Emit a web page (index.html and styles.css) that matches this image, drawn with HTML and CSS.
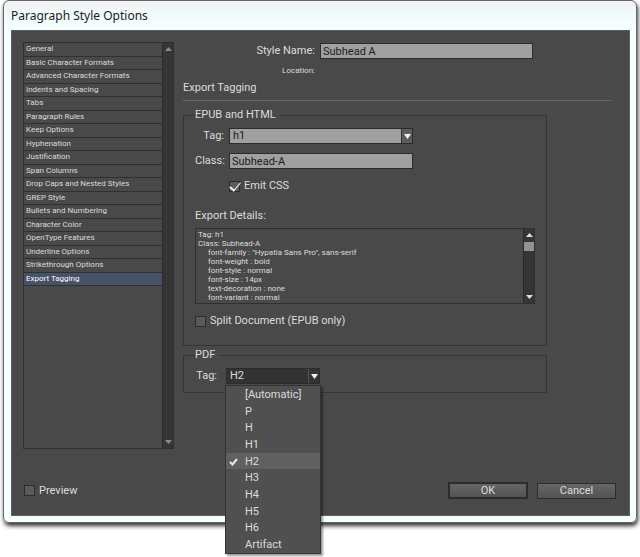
FILE: index.html
```html
<!DOCTYPE html>
<html lang="en">
<head>
    <meta charset="utf-8">
    <title>Paragraph Style Options</title>
    <link rel="stylesheet" href="styles.css">
</head>
<body>

<div class="window">
    <h1 class="title">Paragraph Style Options</h1>

    <form class="dialog">
        <div class="main">
            <nav class="sidebar">
                <div class="list">
                    <a href="#">General</a>
                    <a href="#">Basic Character Formats</a>
                    <a href="#">Advanced Character Formats</a>
                    <a href="#">Indents and Spacing</a>
                    <a href="#">Tabs</a>
                    <a href="#">Paragraph Rules</a>
                    <a href="#">Keep Options</a>
                    <a href="#">Hyphenation</a>
                    <a href="#">Justification</a>
                    <a href="#">Span Columns</a>
                    <a href="#">Drop Caps and Nested Styles</a>
                    <a href="#">GREP Style</a>
                    <a href="#">Bullets and Numbering</a>
                    <a href="#">Character Color</a>
                    <a href="#">OpenType Features</a>
                    <a href="#">Underline Options</a>
                    <a href="#">Strikethrough Options</a>
                    <a href="#" class="active">Export Tagging</a>
                </div>
                <div class="scrollbar dim">
                    <svg width="7" height="4" viewBox="0 0 7 4"><path d="M0 4L3.5 0L7 4Z"/></svg>
                    <svg width="7" height="4" viewBox="0 0 7 4"><path d="M0 0L3.5 4L7 0Z"/></svg>
                </div>
            </nav>

            <div class="panel">
                <div class="name-row">
                    <label for="styleName">Style Name:</label>
                    <input type="text" id="styleName" class="field" value="Subhead A">
                </div>
                <div class="location">Location:</div>

                <h2 class="heading">Export Tagging</h2>

                <fieldset class="group epub">
                    <legend>EPUB and HTML</legend>
                    <div class="row">
                        <label for="epubTag">Tag:</label>
                        <div class="select light">
                            <select id="epubTag" class="field">
                                <option>h1</option>
                                <option>h2</option>
                                <option>p</option>
                            </select>
                            <span class="arrow"><svg width="7" height="5" viewBox="0 0 7 5"><path d="M0 0L3.5 5L7 0Z"/></svg></span>
                        </div>
                    </div>
                    <div class="row">
                        <label for="className">Class:</label>
                        <input type="text" id="className" class="field" value="Subhead-A">
                    </div>
                    <label class="check emit"><input type="checkbox" checked>Emit CSS</label>

                    <label class="details-label" for="details">Export Details:</label>
                    <div class="details">
                        <textarea id="details" readonly>Tag: h1
Class: Subhead-A
     font-family : "Hypatia Sans Pro", sans-serif
     font-weight : bold
     font-style : normal
     font-size : 14px
     text-decoration : none
     font-variant : normal</textarea>
                        <div class="scrollbar">
                            <svg width="7" height="4" viewBox="0 0 7 4"><path d="M0 4L3.5 0L7 4Z"/></svg>
                            <div class="thumb"></div>
                            <svg width="7" height="4" viewBox="0 0 7 4"><path d="M0 0L3.5 4L7 0Z"/></svg>
                        </div>
                    </div>
                    <label class="check"><input type="checkbox">Split Document (EPUB only)</label>
                </fieldset>

                <fieldset class="group pdf">
                    <legend>PDF</legend>
                    <div class="row">
                        <label for="pdfTag">Tag:</label>
                        <div class="select dark">
                            <select id="pdfTag">
                                <option>H2</option>
                            </select>
                            <span class="arrow"><svg width="7" height="5" viewBox="0 0 7 5"><path d="M0 0L3.5 5L7 0Z"/></svg></span>
                            <div class="menu">
                                <button type="button">[Automatic]</button>
                                <button type="button">P</button>
                                <button type="button">H</button>
                                <button type="button">H1</button>
                                <button type="button" class="selected"><svg width="9" height="8" viewBox="0 0 9 8"><path d="M1 4L3.5 6.5L8 1"/></svg>H2</button>
                                <button type="button">H3</button>
                                <button type="button">H4</button>
                                <button type="button">H5</button>
                                <button type="button">H6</button>
                                <button type="button">Artifact</button>
                            </div>
                        </div>
                    </div>
                </fieldset>
            </div>
        </div>

        <div class="footer">
            <label class="check"><input type="checkbox">Preview</label>
            <button type="submit" class="btn ok">OK</button>
            <button type="button" class="btn">Cancel</button>
        </div>
    </form>
</div>

</body>
</html>
```
FILE: styles.css
```css
* {
    box-sizing: border-box;
}

body {
    margin: 0;
    padding: 0 3px 34px;
    background: #fff;
    color: #dcdcdc;
    font-family: Roboto, "Noto Sans", sans-serif;
    font-size: 11px;
    line-height: 14px;
}

input, select, textarea, button {
    margin: 0;
    font: inherit;
    color: inherit;
}

.window {
    padding: 0 6px 6px 7px;
    border: 1px solid #666;
    border-radius: 6px;
    background: linear-gradient(#f1f1f3, #f0fafa 12px, #f5ffff 28px);
    box-shadow: 1px 3px 4px rgba(0, 0, 0, 0.8);
}

.title {
    margin: 0;
    height: 29px;
    font-family: "Noto Sans", sans-serif;
    font-size: 12px;
    font-weight: normal;
    line-height: 30px;
    color: #222;
}

.dialog {
    padding: 11px 13px 16px 11px;
    border: 1px solid #5d6060;
    background: #494949;
}

.main {
    display: flex;
    gap: 9px;
}

/* left list */
.sidebar {
    display: flex;
    width: 151px;
    height: 407px;
    border: 1px solid #303030;
}

.list {
    display: grid;
    grid-auto-rows: 1fr;
    flex: 1;
    height: 243px;
}

.list a {
    padding-left: 2px;
    border-bottom: 1px solid #303030;
    font-size: 8px;
    line-height: 12px;
    color: #dcdcdc;
    text-decoration: none;
    white-space: nowrap;
}

.list a.active {
    background: #465266;
    color: #fff;
}

.scrollbar {
    display: flex;
    flex-direction: column;
    justify-content: space-between;
    align-items: center;
    width: 11px;
    padding: 4px 0;
    border-left: 1px solid #2a2a2a;
    background: #353535;
    fill: #e0e0e0;
}

.scrollbar.dim {
    fill: #8c8c8c;
}

/* right side */
.panel {
    flex: 1;
}

.name-row {
    display: flex;
    gap: 5px;
    margin-top: 1px;
}

.name-row label, .location {
    width: 132px;
    text-align: right;
}

.name-row label, .row label {
    line-height: 16px;
}

.field {
    height: 16px;
    padding: 0 2px;
    border: 1px solid #2c2c2c;
    border-radius: 0;
    background: #a0a0a0;
    color: #1c1c1c;
}

.name-row .field {
    width: 213px;
}

.location {
    margin-top: 5px;
    font-size: 8px;
}

.heading {
    margin: 3px 4px 7px 0;
    padding-bottom: 5px;
    border-bottom: 1px solid #666;
    font-size: 11px;
    font-weight: normal;
    line-height: 14px;
}

.group {
    margin: 0 69px 0 0;
    padding: 6px 11px 0;
    border: 1px solid #363636;
}

.group legend {
    padding: 0 4px 0 0;
}

.row {
    display: flex;
    gap: 5px;
    margin-bottom: 9px;
}

.row label {
    width: 29px;
    text-align: right;
    white-space: nowrap;
}

.row > .field, .select.light {
    width: 184px;
}

.select {
    display: flex;
    position: relative;
    height: 16px;
}

.select select {
    width: 100%;
    height: 16px;
    padding: 0 3px;
    border: 1px solid #2c2c2c;
    border-radius: 0;
    appearance: none;
}

.arrow {
    display: flex;
    position: absolute;
    top: 1px;
    right: 1px;
    justify-content: center;
    align-items: center;
    width: 11px;
    height: 14px;
    border-left: 1px solid #333;
    background: #5c5c5c;
    fill: #f0f0f0;
    pointer-events: none;
}

.check {
    display: flex;
    align-items: center;
    gap: 4px;
}

.check input {
    width: 11px;
    height: 11px;
    border: 1px solid #2c2c2c;
    background: #5a5a5a;
    appearance: none;
}

.check input:checked {
    display: flex;
    justify-content: center;
    align-items: flex-start;
}

.check input:checked::before {
    content: "";
    flex: none;
    width: 5px;
    height: 9px;
    margin-top: -2px;
    border: solid #f0f0f0;
    border-width: 0 1px 2px 0;
    transform: rotate(40deg);
}

.emit {
    margin: 10px 0 0 34px;
}

.details-label {
    display: block;
    margin: 16px 0 5px;
}

.details {
    display: flex;
    height: 76px;
    border: 1px solid #303030;
}

.details textarea {
    flex: 1;
    padding: 1px 2px;
    border: 0;
    background: none;
    font-size: 8px;
    line-height: 9px;
    resize: none;
    overflow: hidden;
}

.details .scrollbar {
    justify-content: flex-start;
}

.thumb {
    width: 100%;
    height: 9px;
    margin: 5px 0 auto;
    background: #929292;
}

.epub .details + .check {
    margin: 10px 0 17px;
}

.pdf {
    margin-top: 2px;
}

.pdf .row {
    margin-bottom: 8px;
}

.pdf .row label {
    width: 26px;
    padding-right: 4px;
}

.select.dark {
    width: 94px;
}

.dark select {
    background: #333;
}

.dark .arrow {
    border-left: 1px solid #555;
    background: #333;
}

.menu {
    display: grid;
    position: absolute;
    top: 17px;
    left: -1px;
    z-index: 1;
    width: 96px;
    height: 169px;
    border: 1px solid #333;
    background: #505050;
    box-shadow: 2px 2px 2px rgba(0, 0, 0, 0.4);
}

.menu button {
    position: relative;
    padding: 1px 0 0 19px;
    border: 0;
    background: none;
    line-height: 14px;
    text-align: left;
}

.menu .selected {
    background: #606060;
}

.menu svg {
    position: absolute;
    top: 5px;
    left: 3px;
    fill: none;
    stroke: #e8e8e8;
    stroke-width: 2;
}

.footer {
    display: flex;
    align-items: center;
    margin-top: 33px;
    padding-left: 1px;
}

.btn {
    width: 79px;
    height: 16px;
    padding: 0;
    border: 1px solid #2c2c2c;
    background: linear-gradient(#656565, #535353);
    line-height: 13px;
}

.footer .ok {
    width: 80px;
    height: 17px;
    margin: 0 9px 0 auto;
    border-width: 2px;
}
```
